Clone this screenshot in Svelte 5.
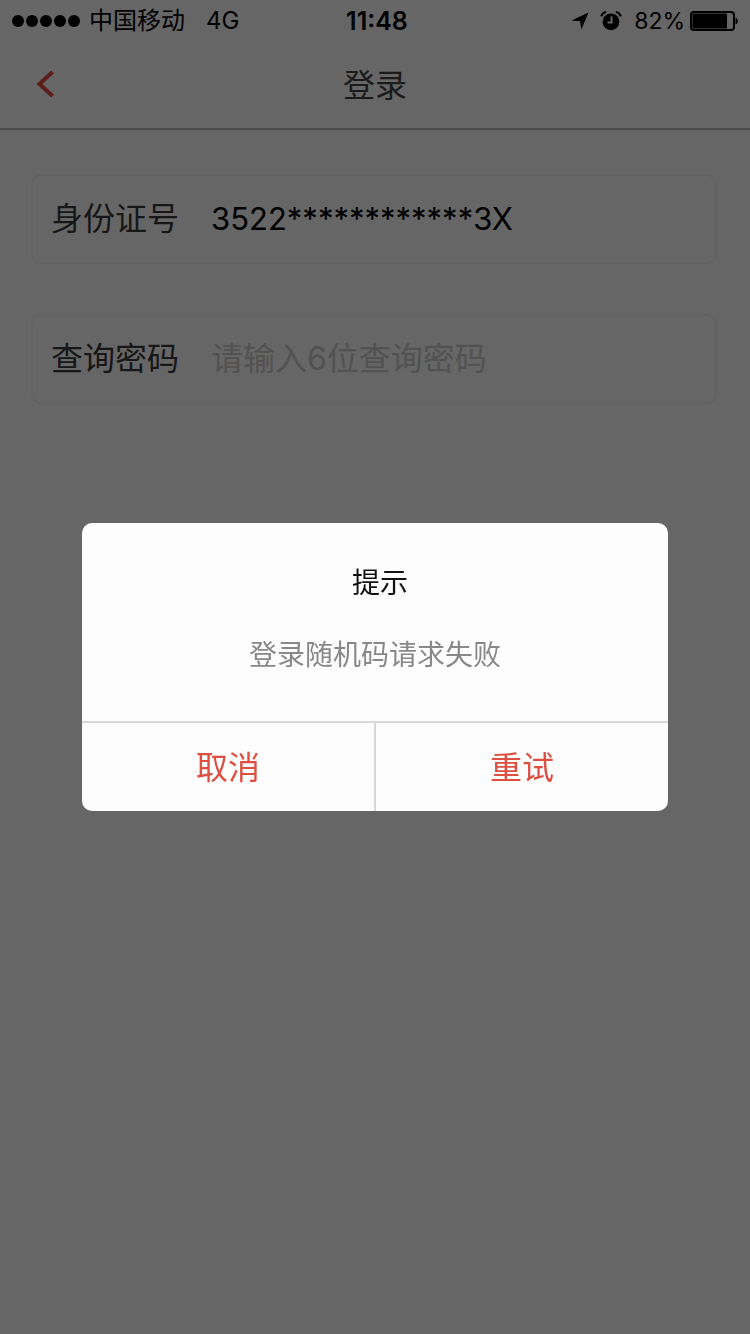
<script>
    let idNumber = "3522************3X";
    let password = "";
    let showDialog = true;

    const signalDots = [0, 1, 2, 3, 4];

    function closeDialog() {
        showDialog = false;
    }
</script>

<div class="page">
    <div class="statusBar">
        <div class="carrier">
            <div class="signal">
                {#each signalDots as dot (dot)}
                    <span class="dot"></span>
                {/each}
            </div>
            <span>中国移动</span>
            <span class="network">4G</span>
        </div>
        <span class="time">11:48</span>
        <div class="indicators">
            <svg class="location" width="18" height="18" viewBox="0 0 18 18" aria-hidden="true">
                <path d="M17.5 0.5 L0.5 8.6 L9 9.2 L10.4 17.5 Z" />
            </svg>
            <svg class="alarm" width="22" height="20" viewBox="0 0 22 20" aria-hidden="true">
                <circle cx="11" cy="10.8" r="8.4" />
                <path class="bells" d="M1.2 5.4 C2 3 3.8 1.5 6.2 0.9 M20.8 5.4 C20 3 18.2 1.5 15.8 0.9" />
                <path class="hands" d="M11.5 5.5 V11.5 H7.5" />
            </svg>
            <span>82%</span>
            <svg class="battery" width="48" height="20" viewBox="0 0 48 20" aria-hidden="true">
                <rect class="shell" x="1" y="1" width="43" height="18" rx="3" />
                <rect x="2.5" y="2.5" width="34.5" height="15" rx="1" />
                <path d="M45.5 6.5 C48.5 7.5 48.5 12.5 45.5 13.5 Z" />
            </svg>
        </div>
    </div>

    <header>
        <button class="back" aria-label="返回">
            <svg width="18" height="28" viewBox="0 0 18 28" aria-hidden="true">
                <path d="M16.5 2 L3.5 14 L16.5 26" />
            </svg>
        </button>
        <h1>登录</h1>
    </header>

    <form>
        <div class="field">
            <label for="idNumber">身份证号</label>
            <input id="idNumber" type="text" bind:value={idNumber}>
        </div>
        <div class="field">
            <label for="password">查询密码</label>
            <input id="password" type="password" placeholder="请输入6位查询密码" bind:value={password}>
        </div>
    </form>
</div>

{#if showDialog}
    <div class="overlay">
        <div class="dialog" role="alertdialog" aria-labelledby="dialogTitle" aria-describedby="dialogText">
            <div class="message">
                <h2 id="dialogTitle">提示</h2>
                <p id="dialogText">登录随机码请求失败</p>
            </div>
            <div class="actions">
                <button on:click={closeDialog}>取消</button>
                <button on:click={closeDialog}>重试</button>
            </div>
        </div>
    </div>
{/if}

<style>
    :global(body) {
        background: white;
        font-family: Inter, "Noto Sans CJK SC", sans-serif;
    }

    .page {
        min-height: 100vh;
        color: black;
    }

    .statusBar {
        display: grid;
        grid-template-columns: 1fr auto 1fr;
        align-items: center;
        height: 40px;
        padding: 0 12px;
        font-size: 24px;
        line-height: 42px;
    }

    .carrier {
        display: flex;
        align-items: center;
        gap: 9px;
    }

    .signal {
        display: flex;
        gap: 2px;
    }

    .dot {
        width: 12px;
        height: 12px;
        border-radius: 50%;
        background: black;
    }

    .network {
        margin-left: 12px;
    }

    .time {
        margin-left: 4px;
        font-size: 25px;
        font-weight: 600;
    }

    .indicators {
        display: flex;
        align-items: center;
        justify-content: flex-end;
        font-size: 23px;
    }

    .location {
        margin-right: 11px;
    }

    .alarm {
        margin-right: 12px;
    }

    .battery {
        margin-left: 5px;
    }

    .shell {
        fill: none;
        stroke: black;
        stroke-width: 2;
    }

    .bells {
        fill: none;
        stroke: black;
        stroke-width: 2;
    }

    .hands {
        fill: none;
        stroke: white;
        stroke-width: 2;
    }

    header {
        display: grid;
        grid-template-columns: 1fr auto 1fr;
        align-items: center;
        height: 88px;
        border-bottom: 2px solid #bbb;
    }

    .back {
        justify-self: start;
        display: flex;
        padding: 12px 36px;
        border: none;
        background: none;
        cursor: pointer;
    }

    .back path {
        fill: none;
        stroke: #e04f40;
        stroke-width: 4;
    }

    h1 {
        margin: 0;
        padding-top: 4px;
        color: #444;
        font-size: 32px;
        font-weight: 400;
        line-height: 48px;
    }

    form {
        display: flex;
        flex-direction: column;
        gap: 50px;
        padding: 44px 33px 0 31px;
    }

    .field {
        display: flex;
        align-items: center;
        height: 90px;
        box-sizing: border-box;
        padding: 0 18px;
        border: 2px solid #f4f4f4;
        border-radius: 10px;
        font-size: 32px;
    }

    label {
        color: #3a3a3a;
        line-height: 48px;
        white-space: nowrap;
    }

    input {
        flex: 1;
        min-width: 0;
        margin-left: 32px;
        padding: 0;
        border: none;
        outline: none;
        background: none;
        color: black;
        font-family: inherit;
        font-size: 31px;
        line-height: 48px;
    }

    input::placeholder {
        color: #ccc;
        font-size: 32px;
        opacity: 1;
    }

    .overlay {
        position: fixed;
        inset: 0;
        display: flex;
        align-items: center;
        justify-content: center;
        padding: 0 82px;
        background: rgba(0, 0, 0, 0.6);
    }

    .dialog {
        flex: 1;
        border-radius: 10px;
        background: #fdfdfd;
        overflow: hidden;
    }

    .message {
        padding: 40px 20px 46px;
        text-align: center;
    }

    h2 {
        margin: 0 0 32px;
        padding-left: 10px;
        color: #111;
        font-size: 28px;
        font-weight: 400;
        line-height: 40px;
    }

    p {
        margin: 0;
        color: #888;
        font-size: 28px;
        line-height: 40px;
    }

    .actions {
        display: flex;
        border-top: 2px solid #d8d8d8;
    }

    .actions button {
        flex: 1;
        height: 88px;
        padding: 0 0 4px;
        border: none;
        background: none;
        color: #dd4f40;
        font-family: inherit;
        font-size: 32px;
        cursor: pointer;
    }

    .actions button + button {
        border-left: 2px solid #d8d8d8;
    }
</style>
